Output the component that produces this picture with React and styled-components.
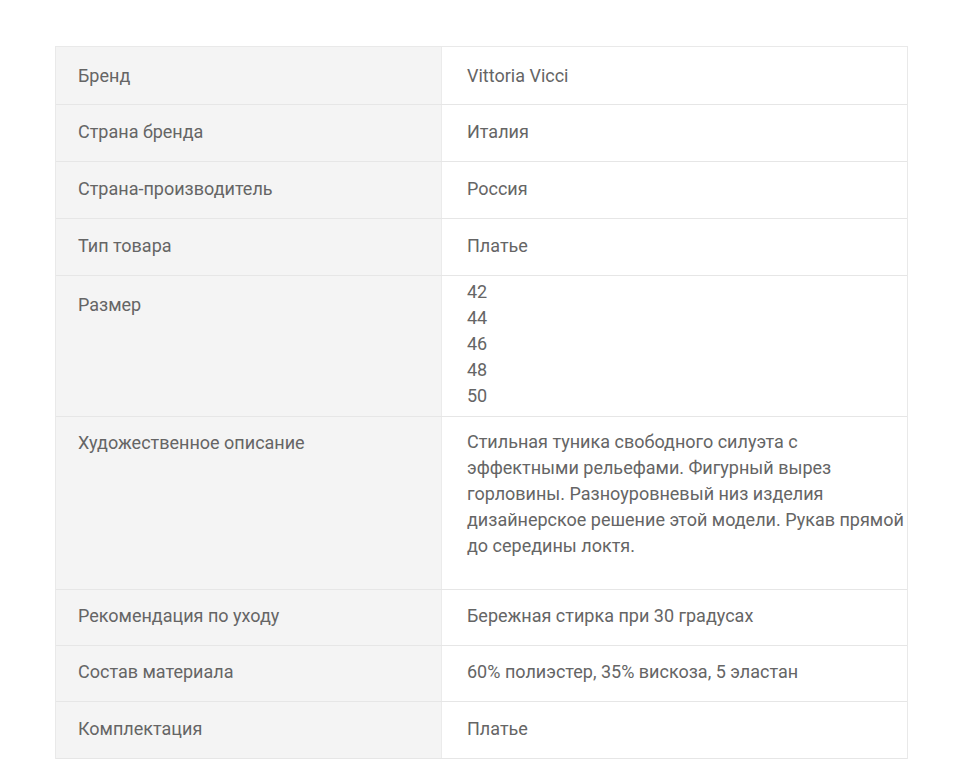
import React from "react";
import styled, { createGlobalStyle } from "styled-components";

const GlobalStyle = createGlobalStyle`
  html, body {
    margin: 0;
    padding: 0;
    background: #ffffff;
  }

  body {
    font-family: Roboto, "Liberation Sans", sans-serif;
  }
`;

const Page = styled.div`
  padding: 46px 0 0 55px;
`;

const Table = styled.div`
  width: 853px;
  box-sizing: border-box;
  border: 1px solid #e9e9e9;
  border-bottom-width: 0;
`;

const Row = styled.div`
  display: grid;
  grid-template-columns: 386px 1fr;
  height: ${(p) => p.$height || 57}px;
  box-sizing: border-box;
  border-bottom: 1px solid #e6e6e6;
`;

const Cell = styled.div`
  display: flex;
  flex-direction: column;
  justify-content: ${(p) => (p.$top !== undefined ? "flex-start" : "center")};
  padding-top: ${(p) => (p.$top !== undefined ? p.$top : 0)}px;
  padding-bottom: ${(p) => (p.$top !== undefined ? 0 : 3)}px;
  box-sizing: border-box;
  font-size: 18px;
  line-height: 26px;
  color: #656565;
`;

const Label = styled(Cell)`
  background: #f4f4f4;
  padding-left: 22px;
  border-right: 1px solid #ebebeb;
`;

const Value = styled(Cell)`
  padding-left: 25px;
  padding-right: 0;
  white-space: nowrap;
`;

const rows = [
  { label: "Бренд", value: ["Vittoria Vicci"], height: 58, labelTop: 16, valueTop: 16 },
  { label: "Страна бренда", value: ["Италия"] },
  { label: "Страна-производитель", value: ["Россия"] },
  { label: "Тип товара", value: ["Платье"] },
  {
    label: "Размер",
    value: ["42", "44", "46", "48", "50"],
    height: 141,
    labelTop: 16,
    valueTop: 3,
  },
  {
    label: "Художественное описание",
    value: [
      "Стильная туника свободного силуэта с",
      "эффектными рельефами. Фигурный вырез",
      "горловины. Разноуровневый низ изделия",
      "дизайнерское решение этой модели. Рукав прямой",
      "до середины локтя.",
    ],
    height: 173,
    labelTop: 13,
    valueTop: 12,
  },
  { label: "Рекомендация по уходу", value: ["Бережная стирка при 30 градусах"], height: 56 },
  { label: "Состав материала", value: ["60% полиэстер, 35% вискоза, 5 эластан"], height: 56 },
  { label: "Комплектация", value: ["Платье"] },
];

export default function App() {
  return (
    <>
      <GlobalStyle />
      <Page>
        <Table>
          {rows.map((row) => (
            <Row key={row.label} $height={row.height}>
              <Label $top={row.labelTop}>{row.label}</Label>
              <Value $top={row.valueTop}>
                {row.value.map((line, i) => (
                  <span key={i}>{line}</span>
                ))}
              </Value>
            </Row>
          ))}
        </Table>
      </Page>
    </>
  );
}
